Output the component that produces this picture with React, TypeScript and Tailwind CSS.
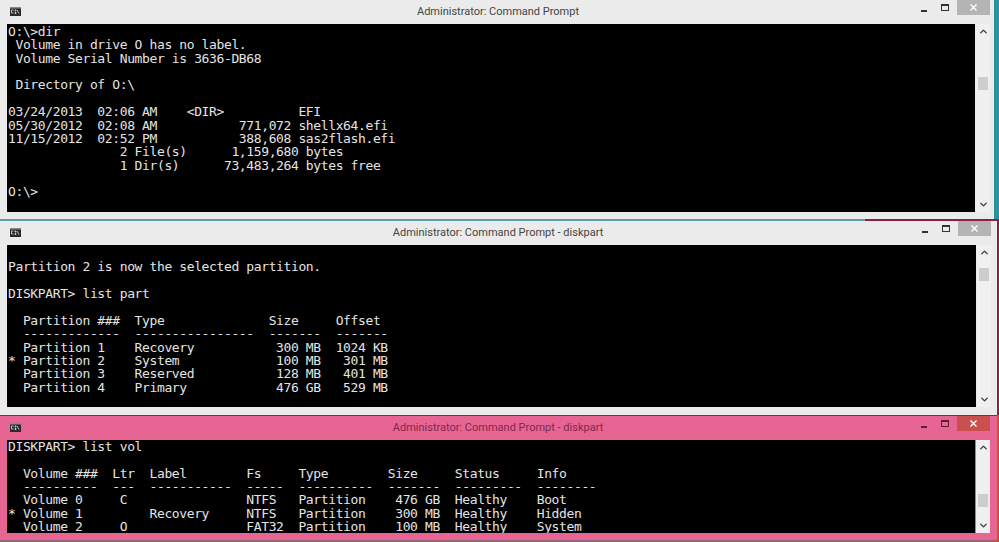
import { ChevronDown, ChevronUp } from "lucide-react";

const dirOutput = `O:\\>dir
 Volume in drive O has no label.
 Volume Serial Number is 3636-DB68

 Directory of O:\\

03/24/2013  02:06 AM    <DIR>          EFI
05/30/2012  02:08 AM           771,072 shellx64.efi
11/15/2012  02:52 PM           388,608 sas2flash.efi
               2 File(s)      1,159,680 bytes
               1 Dir(s)      73,483,264 bytes free

O:\\>`;

const partOutput = `
Partition 2 is now the selected partition.

DISKPART> list part

  Partition ###  Type              Size     Offset
  -------------  ----------------  -------  -------
  Partition 1    Recovery           300 MB  1024 KB
* Partition 2    System             100 MB   301 MB
  Partition 3    Reserved           128 MB   401 MB
  Partition 4    Primary            476 GB   529 MB`;

const volOutput = `DISKPART> list vol

  Volume ###  Ltr  Label        Fs     Type        Size     Status     Info
  ----------  ---  -----------  -----  ----------  -------  ---------  --------
  Volume 0     C                NTFS   Partition    476 GB  Healthy    Boot
* Volume 1         Recovery     NTFS   Partition    300 MB  Healthy    Hidden
  Volume 2     O                FAT32  Partition    100 MB  Healthy    System`;

function ConsoleIcon() {
  return (
    <svg width="11" height="9" viewBox="0 0 11 9" aria-hidden="true">
      <rect width="11" height="9" fill="#2a2a2a" />
      <rect width="11" height="1.5" fill="#8a8a8a" />
      <path d="M1.5 3h2M1.5 3v3h2M5 3h1v1H5zM5 5.500h1v1H5zM7 3l2 3.500" stroke="#ddd" strokeWidth="0.8" fill="none" />
    </svg>
  );
}

function WindowControls({ closeClass, iconClass }: { closeClass: string; iconClass: string }) {
  return (
    <div className={`flex items-start ${iconClass}`}>
      <div className="w-[17px] h-[15px] flex items-end justify-center pb-[3px]">
        <div className="w-[6px] h-[2px] bg-current" />
      </div>
      <div className="w-[26px] h-[15px] flex items-center justify-center">
        <div className="w-[8px] h-[7px] border border-current border-t-2" />
      </div>
      <div className={`w-[33px] h-[15px] flex items-center justify-center ml-[-1px] ${closeClass}`}>
        <svg width="7" height="7" viewBox="0 0 7 7" aria-hidden="true">
          <path d="M.5.5l6 6M6.500.5l-6 6" stroke="#fff" strokeWidth="1.300" />
        </svg>
      </div>
    </div>
  );
}

function CmdWindow({
  title,
  text,
  windowClass,
  bodyClass,
  titleClass,
  thumbClass,
  closeClass,
  iconClass,
  textClass,
}: {
  title: string;
  text: string;
  windowClass: string;
  bodyClass: string;
  titleClass: string;
  thumbClass: string;
  closeClass: string;
  iconClass: string;
  textClass: string;
}) {
  return (
    <section className={`relative flex flex-col shrink-0 ${windowClass}`}>
      {/* Title bar */}
      <div className="relative h-[24px] shrink-0 flex items-start justify-between pl-[10px]">
        <div className="pt-[7px] flex">
          <ConsoleIcon />
        </div>
        <div className={`absolute left-0 w-[996px] top-[4px] text-center text-[11px] leading-[16px] font-['Roboto',sans-serif] ${titleClass}`}>
          {title}
        </div>
        <WindowControls closeClass={closeClass} iconClass={iconClass} />
      </div>

      {/* Console + scrollbar */}
      <div className={`flex pl-[7px] ${bodyClass}`}>
        <pre className={`flex-1 min-w-0 overflow-hidden bg-black text-[#e4e4e4] pl-px text-[13px] tracking-[-0.38px] leading-[13.36px] font-['DejaVu_Sans_Mono',monospace] ${textClass}`}>
          {text}
        </pre>
        <div className="w-[14px] ml-px shrink-0 flex flex-col bg-[#f0f0f0] text-[#3c3c3c]">
          <div className="h-[15px] shrink-0 flex items-center justify-center">
            <ChevronUp size={11} strokeWidth={3} />
          </div>
          <div className={`h-[13px] mx-[2px] shrink-0 bg-[#cdcdcd] ${thumbClass}`} />
          <div className="h-[15px] shrink-0 mt-auto flex items-center justify-center">
            <ChevronDown size={11} strokeWidth={3} />
          </div>
        </div>
      </div>
    </section>
  );
}

export default function App() {
  return (
    <div className="relative w-[999px] h-[542px] overflow-hidden bg-[#c9503c] flex flex-col">
      {/* desktop strip at the right of the top window */}
      <div className="absolute right-0 top-0 w-[5px] h-[220px] bg-[#2f8f9f]" />

      <CmdWindow
        title="Administrator: Command Prompt"
        text={dirOutput}
        windowClass="w-[994px] h-[219px] pr-[4px] bg-[#ebebeb] z-10"
        bodyClass="h-[188px]"
        titleClass="text-[#444444]"
        thumbClass="mt-[38px]"
        closeClass="bg-[#b4b4b4]"
        iconClass="text-[#333333]"
        textClass="pt-[1px]"
      />

      <CmdWindow
        title="Administrator: Command Prompt - diskpart"
        text={partOutput}
        windowClass="w-[999px] h-[196px] pr-[6px] bg-[#ebebeb] border-t-2 border-[#5d9eaa] border-r-2 border-r-[#8c2040] z-10"
        bodyClass="h-[162px]"
        titleClass="text-[#444444]"
        thumbClass="mt-[8px]"
        closeClass="bg-[#b4b4b4]"
        iconClass="text-[#333333]"
        textClass="pt-[2px]"
      />

      <div className="absolute left-[865px] right-0 top-[219px] h-[2px] bg-[#8c2040] z-20" />

      <CmdWindow
        title="Administrator: Command Prompt - diskpart"
        text={volOutput}
        windowClass="w-[997px] h-[126px] pr-[7px] bg-[#e76592] border-t border-b border-t-[#43465f] border-b-[#8f6a85] z-10"
        bodyClass="h-[93px]"
        titleClass="text-[#80284f]"
        thumbClass="mt-[39px]"
        closeClass="bg-[#c9504f]"
        iconClass="text-[#5a2038]"
        textClass="pt-0"
      />
    </div>
  );
}
